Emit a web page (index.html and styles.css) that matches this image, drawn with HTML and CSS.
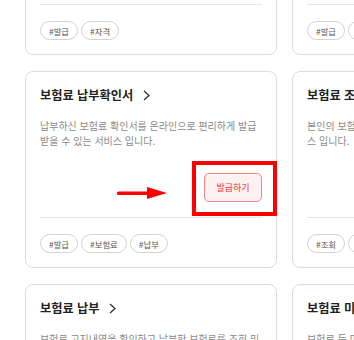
FILE: index.html
```html
<!DOCTYPE html>
<html lang="ko">
<head>
<meta charset="utf-8">
<link rel="stylesheet" href="styles.css">
</head>
<body>
<div class="grid">
  <div class="card">
    <div class="title">자격득실 확인서 <svg class="chev" width="7" height="11" viewBox="0 0 7 11"><polyline points="1,1 6,5.5 1,10" fill="none" stroke="#333" stroke-width="1.3"/></svg></div>
    <p class="desc">건강보험 자격득실 확인서를 온라인으로 편리하게 발급 받을 수 있는 서비스 입니다.</p>
    <div class="action"><button class="btn">발급하기</button></div>
    <div class="foot">
      <div class="tags"><span class="tag">#발급</span><span class="tag">#자격</span></div>
    </div>
  </div>
  <div class="card">
    <div class="title">자격 확인서 <svg class="chev" width="7" height="11" viewBox="0 0 7 11"><polyline points="1,1 6,5.5 1,10" fill="none" stroke="#333" stroke-width="1.3"/></svg></div>
    <p class="desc">자격 확인서를 온라인으로 편리하게 발급 받을 수 있는 서비스 입니다.</p>
    <div class="action"><button class="btn">발급하기</button></div>
    <div class="foot">
      <div class="tags"><span class="tag">#발급</span><span class="tag">#확인</span></div>
    </div>
  </div>

  <div class="card">
    <div class="title">보험료 납부확인서 <svg class="chev" width="7" height="11" viewBox="0 0 7 11"><polyline points="1,1 6,5.5 1,10" fill="none" stroke="#333" stroke-width="1.3"/></svg></div>
    <p class="desc">납부하신 보험료 확인서를 온라인으로 편리하게 발급 받을 수 있는 서비스 입니다.</p>
    <div class="action"><button class="btn">발급하기</button></div>
    <div class="foot">
      <div class="tags"><span class="tag">#발급</span><span class="tag">#보험료</span><span class="tag">#납부</span></div>
    </div>
    <svg class="arrow" width="50" height="12" viewBox="0 0 50 12"><rect x="0" y="4.5" width="32" height="3.4" rx="1.5" fill="#f00"/><polygon points="30,0 50,6 30,12" fill="#f00"/></svg>
    <div class="highlight"></div>
  </div>
  <div class="card">
    <div class="title">보험료 조회 <svg class="chev" width="7" height="11" viewBox="0 0 7 11"><polyline points="1,1 6,5.5 1,10" fill="none" stroke="#333" stroke-width="1.3"/></svg></div>
    <p class="desc">본인의 보험료 부과내역을 상세히 조회할 수 있는 서비스 입니다.</p>
    <div class="foot">
      <div class="tags"><span class="tag">#조회</span><span class="tag">#보험료</span></div>
    </div>
  </div>

  <div class="card">
    <div class="title">보험료 납부 <svg class="chev" width="7" height="11" viewBox="0 0 7 11"><polyline points="1,1 6,5.5 1,10" fill="none" stroke="#333" stroke-width="1.3"/></svg></div>
    <p class="desc">보험료 고지내역을 확인하고 납부한 보험료를 조회 및 납부할 수 있는 서비스 입니다.</p>
    <div class="foot">
      <div class="tags"><span class="tag">#납부</span></div>
    </div>
  </div>
  <div class="card">
    <div class="title">보험료 미납 조회 <svg class="chev" width="7" height="11" viewBox="0 0 7 11"><polyline points="1,1 6,5.5 1,10" fill="none" stroke="#333" stroke-width="1.3"/></svg></div>
    <p class="desc">보험료 등 미납내역을 조회할 수 있는 서비스 입니다.</p>
    <div class="foot">
      <div class="tags"><span class="tag">#미납</span></div>
    </div>
  </div>
</div>
</body>
</html>
```

FILE: styles.css
```css
* { box-sizing: border-box; }
html, body {
  margin: 0;
  padding: 0;
  background: #fff;
  overflow: hidden;
}
body {
  font-family: "Noto Sans CJK KR", "Noto Sans", sans-serif;
  color: #222;
}
.grid {
  display: grid;
  grid-template-columns: 252px 252px;
  column-gap: 15px;
  row-gap: 16px;
  padding-left: 25px;
  margin-top: -142px;
  width: 800px;
}
.card {
  position: relative;
  display: flex;
  flex-direction: column;
  border: 1px solid #dcdcdc;
  border-radius: 8px;
  padding: 14px;
  height: 197px;
}
.title {
  display: flex;
  align-items: center;
  height: 18px;
  font-size: 12.2px;
  font-weight: 700;
  color: #222;
  white-space: nowrap;
}
.chev {
  margin-left: 10px;
}
.desc {
  margin: 14px 0 0 0;
  font-size: 10px;
  line-height: 15px;
  color: #8a8a8a;
}
.action {
  display: flex;
  justify-content: flex-end;
  margin-top: 25px;
}
.btn {
  width: 58px;
  height: 29px;
  border: 1px solid #f08a8a;
  background: #fff1f1;
  color: #e8333c;
  border-radius: 5px;
  font-family: inherit;
  font-size: 9px;
  padding: 0;
}
.foot {
  margin-top: auto;
  border-top: 1px solid #e6e6e6;
  padding-top: 16px;
}
.tags {
  display: flex;
  gap: 3px;
}
.tag {
  display: inline-flex;
  align-items: center;
  height: 19px;
  padding: 0 8px;
  border: 1px solid #d2d2d2;
  border-radius: 10px;
  font-size: 8.4px;
  color: #555;
  white-space: nowrap;
}
.arrow {
  position: absolute;
  left: 91px;
  top: 115px;
}
.highlight {
  position: absolute;
  left: 166px;
  top: 89px;
  width: 85px;
  height: 55px;
  border: 4px solid #f00;
}
```
